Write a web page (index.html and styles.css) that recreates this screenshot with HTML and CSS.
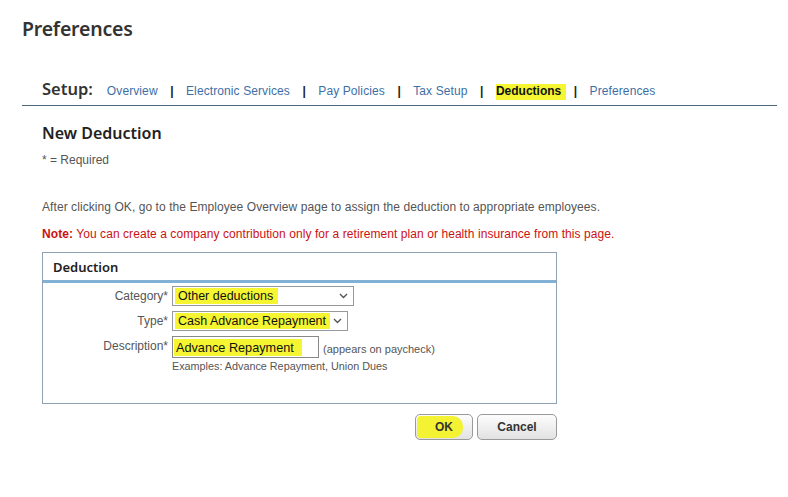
FILE: index.html
```html
<!DOCTYPE html>
<html>
<head>
<meta charset="utf-8">
<link rel="stylesheet" href="styles.css">
</head>
<body>
<div class="page">
  <h1 class="title">Preferences</h1>
  <div class="setup">
    <span class="setup-label">Setup:</span>
    <a class="nav">Overview</a><span class="pipe">|</span>
    <a class="nav">Electronic Services</a><span class="pipe">|</span>
    <a class="nav">Pay Policies</a><span class="pipe">|</span>
    <a class="nav">Tax Setup</a><span class="pipe">|</span>
    <span class="nav current"><span class="hl">Deductions</span></span><span class="pipe">|</span>
    <a class="nav">Preferences</a>
  </div>
  <div class="content">
    <h2 class="subtitle">New Deduction</h2>
    <p class="req">* = Required</p>
    <p class="info">After clicking OK, go to the Employee Overview page to assign the deduction to appropriate employees.</p>
    <p class="note"><b>Note:</b> You can create a company contribution only for a retirement plan or health insurance from this page.</p>
    <div class="box">
      <div class="box-head">Deduction</div>
      <div class="box-body">
        <div class="row">
          <label class="lbl">Category*</label>
          <div class="sel sel-cat"><span class="hl hl-cat">Other deductions</span><svg class="chev" width="9" height="6" viewBox="0 0 9 6"><path d="M1 1l3.5 3.5L8 1" fill="none" stroke="#555" stroke-width="1.4"/></svg></div>
        </div>
        <div class="row">
          <label class="lbl">Type*</label>
          <div class="sel sel-type"><span class="hl hl-type">Cash Advance Repayment</span><svg class="chev" width="9" height="6" viewBox="0 0 9 6"><path d="M1 1l3.5 3.5L8 1" fill="none" stroke="#555" stroke-width="1.4"/></svg></div>
        </div>
        <div class="row row-desc">
          <label class="lbl">Description*</label>
          <div class="ctl">
            <div class="line">
              <div class="inp"><span class="hl hl-desc">Advance Repayment</span></div>
              <span class="hint">(appears on paycheck)</span>
            </div>
            <div class="examples">Examples: Advance Repayment, Union Dues</div>
          </div>
        </div>
      </div>
    </div>
    <div class="actions">
      <button class="btn btn-ok"><span class="ok-hl"></span><span class="btxt">OK</span></button>
      <button class="btn btn-cancel"><span class="btxt">Cancel</span></button>
    </div>
  </div>
</div>
</body>
</html>
```
FILE: styles.css
```css
* { box-sizing: border-box; }
html, body { margin: 0; padding: 0; background: #fff; }
body { font-family: "Liberation Sans", Arial, sans-serif; color: #555; }
.page { padding: 0 11px 0 22px; }
.title {
  margin: 0;
  padding-top: 15px;
  font-family: "Noto Sans", sans-serif;
  font-weight: 600;
  font-size: 19.5px;
  line-height: 27px;
  color: #333;
  letter-spacing: -0.2px;
}
.setup {
  margin-top: 35px;
  display: flex;
  align-items: baseline;
  padding: 0 0 5px 20px;
  border-bottom: 1px solid #4b6a82;
  height: 29px;
}
.setup-label {
  font-family: "Noto Sans", sans-serif;
  font-weight: 600;
  font-size: 16.5px;
  color: #333;
  margin-right: 14px;
}
.nav { font-size: 12px; color: #3d6fa6; text-decoration: none; white-space: nowrap; letter-spacing: 0.1px; }
.current { color: #111; font-weight: bold; letter-spacing: 0; }
.hl { background: #f5f532; }
.current .hl { box-shadow: 5px 0 0 #f5f532, 0 2px 0 #f5f532, 5px 2px 0 #f5f532; }
.pipe { font-size: 12px; font-weight: bold; color: #222; margin: 0 12.5px; }
.content { padding-left: 20px; }
.subtitle {
  margin: 16px 0 0;
  font-family: "Noto Sans", sans-serif;
  font-weight: 600;
  font-size: 16px;
  line-height: 22px;
  color: #222;
}
.req { margin: 9px 0 0; font-size: 12px; line-height: 15px; }
.info { margin: 32px 0 0; font-size: 12px; line-height: 15px; letter-spacing: 0.07px; }
.note { margin: 12px 0 0; font-size: 12px; line-height: 15px; color: #cc1111; letter-spacing: 0.07px; }
.note b { font-weight: bold; }
.box {
  margin-top: 10px;
  width: 515px;
  height: 152px;
  border: 1px solid #8fa2b3;
}
.box-head {
  height: 30px;
  padding: 5px 0 0 10px;
  font-family: "Noto Sans", sans-serif;
  font-weight: 600;
  font-size: 13px;
  color: #222;
  border-bottom: 3px solid #82b1d6;
}
.box-body { padding-top: 3px; }
.row { display: flex; align-items: flex-start; margin-bottom: 5px; }
.lbl {
  width: 129px;
  flex: none;
  text-align: right;
  padding-right: 4px;
  font-size: 12px;
  line-height: 20px;
  color: #555;
}
.sel {
  height: 20px;
  border: 1px solid #999;
  display: flex;
  align-items: center;
  justify-content: space-between;
  padding: 0 5px 0 2px;
  font-size: 12.5px;
  color: #111;
  background: #fff;
  white-space: nowrap;
}
.sel-cat { width: 182px; }
.sel-type { width: 176px; }
.hl-cat { padding: 1px 5px 1px 3px; }
.hl-type { padding: 1px 4px 1px 3px; }
.chev { flex: none; }
.ctl { display: flex; flex-direction: column; }
.line { display: flex; align-items: center; }
.inp {
  width: 147px;
  height: 22px;
  border: 1px solid #888;
  display: flex;
  align-items: center;
  padding-left: 1px;
  font-size: 12.7px;
  color: #111;
  white-space: nowrap;
}
.hl-desc { padding: 2px 8px 1px 2px; }
.hint { margin-left: 4px; font-size: 11px; color: #555; padding-top: 4px; }
.examples { margin-top: 2px; font-size: 10.8px; color: #555; }
.actions {
  width: 515px;
  display: flex;
  justify-content: flex-end;
  gap: 4px;
  margin-top: 10px;
}
.btn {
  position: relative;
  height: 26px;
  border: 1px solid #9a9a9a;
  border-radius: 5px;
  background: linear-gradient(#fdfdfd, #e2e2e2);
  font-family: "Liberation Sans", Arial, sans-serif;
  font-weight: bold;
  font-size: 12px;
  color: #333;
  padding: 0;
  overflow: hidden;
}
.btn-ok { width: 58px; }
.btn-cancel { width: 80px; }
.ok-hl {
  position: absolute;
  left: 1px; top: 1px; bottom: 1px; width: 46px;
  background: #f3f333;
  border-radius: 4px 10px 10px 4px;
}
.btxt { position: relative; }
```
